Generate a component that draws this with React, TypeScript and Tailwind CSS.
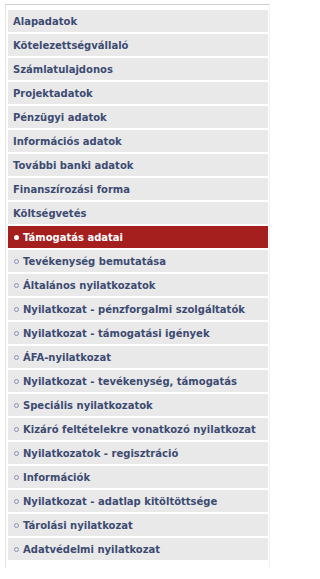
const items = [
  'Alapadatok',
  'Kötelezettségvállaló',
  'Számlatulajdonos',
  'Projektadatok',
  'Pénzügyi adatok',
  'Információs adatok',
  'További banki adatok',
  'Finanszírozási forma',
  'Költségvetés',
  'Támogatás adatai',
  'Tevékenység bemutatása',
  'Általános nyilatkozatok',
  'Nyilatkozat - pénzforgalmi szolgáltatók',
  'Nyilatkozat - támogatási igények',
  'ÁFA-nyilatkozat',
  'Nyilatkozat - tevékenység, támogatás',
  'Speciális nyilatkozatok',
  'Kizáró feltételekre vonatkozó nyilatkozat',
  'Nyilatkozatok - regisztráció',
  'Információk',
  'Nyilatkozat - adatlap kitöltöttsége',
  'Tárolási nyilatkozat',
  'Adatvédelmi nyilatkozat',
];

const ACTIVE = 9;

export default function App() {
  return (
    <div className="min-h-[579px] w-[273px] overflow-hidden bg-white pl-[5px] pt-[4px] font-['DejaVu_Sans',Verdana,sans-serif]">
      <div className="mr-[3px] flex flex-col gap-[2px] border-l border-r border-t border-l-[#e4e4e4] border-r-[#f2f2f2] border-t-[#cfcfcf] pb-2 pl-[2px] pr-[1px] pt-[5px]">
        {items.map((label, i) => {
          const active = i === ACTIVE;
          const after = i > ACTIVE;
          return (
            <div
              key={label}
              className={
                active
                  ? 'flex h-[22px] items-center whitespace-nowrap bg-[#a51f1f] pl-[5px] text-[10px] font-bold text-white'
                  : 'flex h-[22px] items-center whitespace-nowrap bg-[#e9e9e9] pl-[5px] text-[10px] font-bold text-[#3d4b72]'
              }
            >
              {active && (
                <span className="mr-[4px] ml-[1px] inline-block h-[5px] w-[5px] rounded-full bg-white" />
              )}
              {after && (
                <span className="mr-[4px] ml-[1px] inline-block h-[5px] w-[5px] rounded-full border border-[#8593b5]" />
              )}
              {label}
            </div>
          );
        })}
      </div>
    </div>
  );
}
